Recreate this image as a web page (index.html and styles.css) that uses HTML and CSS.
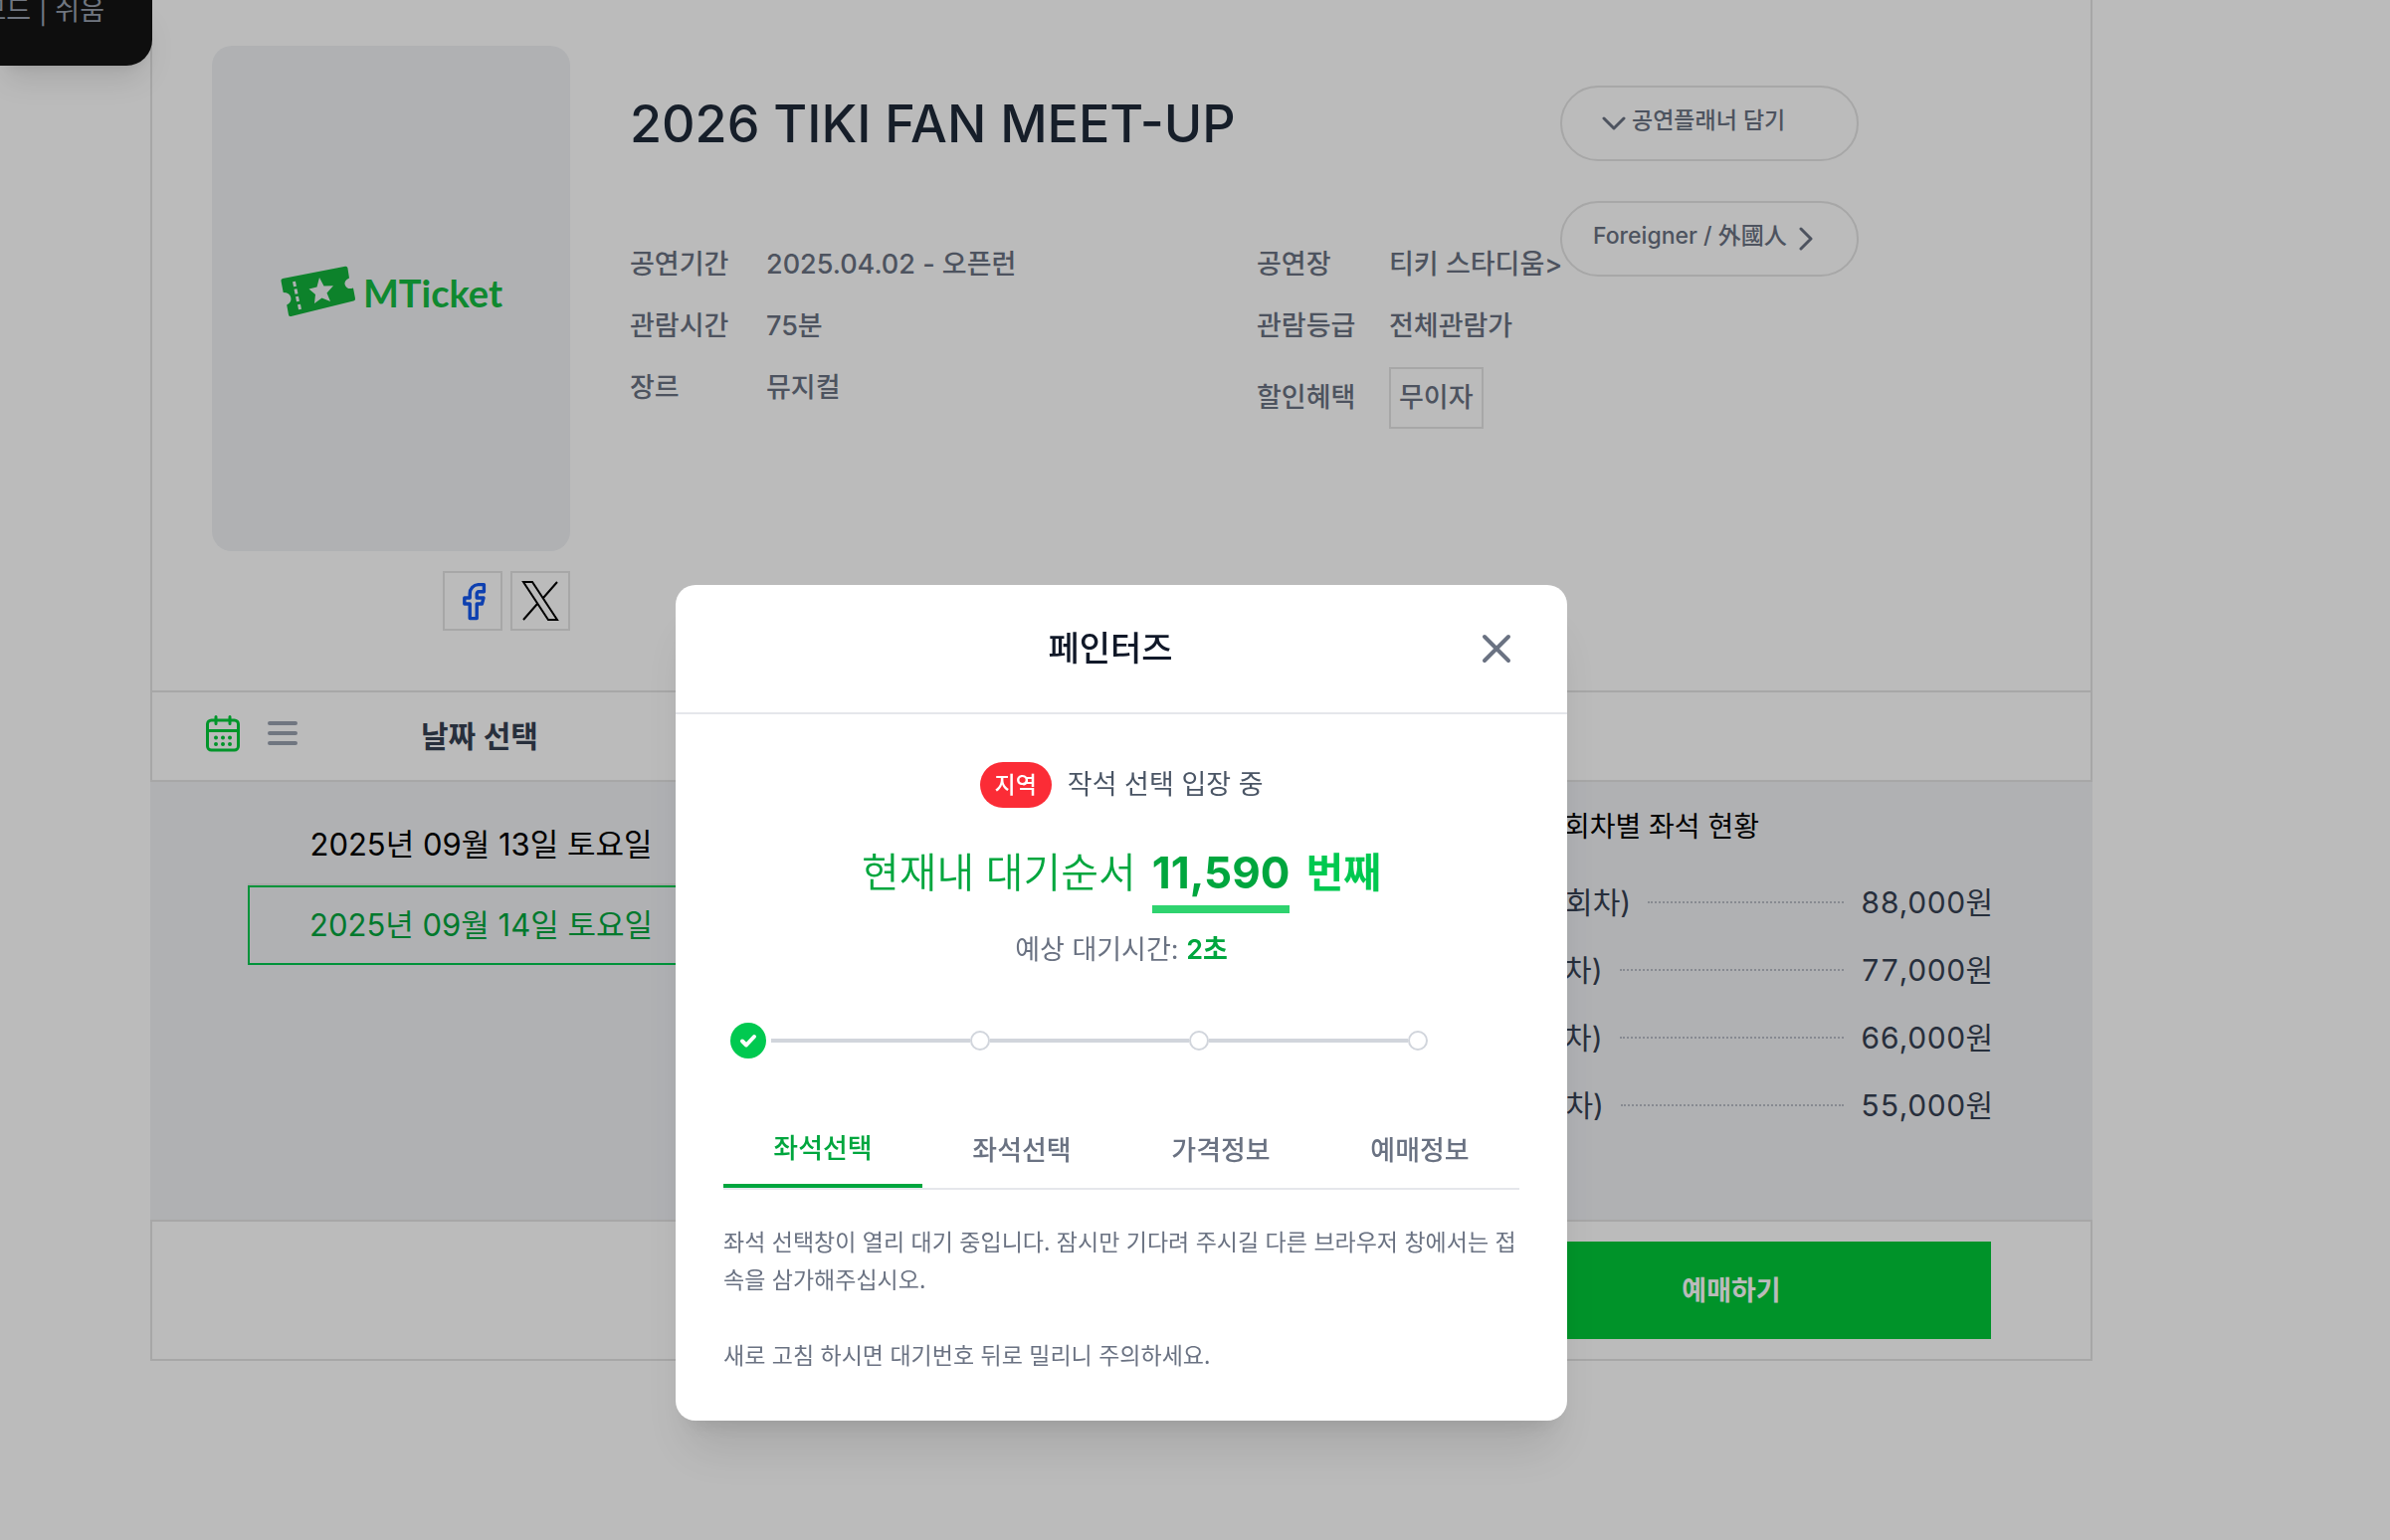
FILE: index.html
```
<!DOCTYPE html>
<html lang="ko">
<head>
<meta charset="utf-8">
<meta name="viewport" content="width=device-width, initial-scale=1">
<title>2026 TIKI FAN MEET-UP</title>
<link rel="stylesheet" href="styles.css">
</head>
<body>
<main class="panel">
  <section class="summary">
    <div class="poster-col">
      <div class="poster">
        <svg class="poster-mark" viewBox="0 0 78 54" aria-hidden="true">
          <path fill="#12b23b" d="M1.500 15.500 Q1 13.500 3 13 L66 0.700 Q68 0.300 68.400 2.300 L70 12.500 Q64 15 66 20 Q68 24.500 74 22.500 L76 33 Q76.300 35 74.300 35.500 L11.500 51 Q9.500 51.500 9 49.500 L7.200 39.500 Q12.500 37 11.300 32 Q10 27 3.700 27 Z"/>
          <path fill="#f0f2f5" d="M40 12 L44.500 20.500 L54 20.200 L47.500 27.500 L51 36 L42.500 32.500 L35 38 L36 29 L29.500 23.500 L37.500 21.500 Z"/>
          <path stroke="#f0f2f5" stroke-width="3" fill="none" d="M14.500 16 l1 5 M16 23.500 l1 5 M17.500 31 l1 5 M19.500 39 l1 5"/>
        </svg>
        <span class="poster-name">MTicket</span>
      </div>
      <div class="share">
        <a class="share-link" href="#facebook" aria-label="Facebook">
          <svg width="48" height="48" viewBox="0 0 24 24" fill="none" stroke="#1458f0" stroke-width="1.700" stroke-linecap="round" stroke-linejoin="round" aria-hidden="true"><path d="M7.900 10.500v3h2.700v7.300h3.500v-7.300h2.600l.8-3h-3.400V8.300a.9.900 0 0 1 .9-.9h2.700V3.800h-2.900a4.400 4.400 0 0 0-4.200 4.400v2.300z"/></svg>
        </a>
        <a class="share-link" href="#x" aria-label="X">
          <svg width="40" height="40" viewBox="0 0 40 40" fill="none" stroke="#000" stroke-width="2" aria-hidden="true"><path d="M3 1h9l25 38h-9zM37 1L23 17M17 23L3 39"/></svg>
        </a>
      </div>
    </div>
    <div class="details">
      <h1 class="title">2026 TIKI FAN MEET-UP</h1>
      <div class="facts">
        <dl class="fact-list fact-list-main">
          <dt>공연기간</dt><dd>2025.04.02 - 오픈런</dd>
          <dt>관람시간</dt><dd>75분</dd>
          <dt>장르</dt><dd>뮤지컬</dd>
        </dl>
        <dl class="fact-list fact-list-venue">
          <dt>공연장</dt><dd><a href="#venue">티키 스타디움&gt;</a></dd>
          <dt>관람등급</dt><dd>전체관람가</dd>
          <dt>할인혜택</dt><dd><span class="benefit">무이자</span></dd>
        </dl>
      </div>
    </div>
    <div class="actions">
      <button class="pill pill-planner" type="button">
        <svg width="24" height="24" viewBox="0 0 24 24" fill="none" stroke="currentColor" stroke-width="3" stroke-linecap="round" stroke-linejoin="round" aria-hidden="true"><path d="M2 7l10 10L22 7"/></svg>
        <span class="pill-label">공연플래너 담기</span>
      </button>
      <button class="pill pill-foreigner" type="button">
        <span class="pill-label">Foreigner / 外國人</span>
        <svg width="24" height="24" viewBox="0 0 24 24" fill="none" stroke="currentColor" stroke-width="3" stroke-linecap="round" stroke-linejoin="round" aria-hidden="true"><path d="M6 2l10 10L6 22"/></svg>
      </button>
    </div>
  </section>

  <section class="picker-bar">
    <button class="icon-button" type="button" aria-label="달력 보기">
      <svg width="48" height="48" viewBox="0 0 48 48" fill="none" stroke="#00cc3a" stroke-width="3" stroke-linecap="round" stroke-linejoin="round" aria-hidden="true">
        <rect x="8.500" y="11" width="31" height="30" rx="4"/><path d="M8.500 21.500h31M17 7.500v7M31 7.500v7"/>
        <path stroke-width="4" d="M17 28.500h0M24 28.500h0M31 28.500h0M17 35h0M24 35h0M31 35h0"/>
      </svg>
    </button>
    <button class="icon-button" type="button" aria-label="목록 보기">
      <svg width="48" height="48" viewBox="0 0 48 48" fill="none" stroke="#99a1af" stroke-width="4" stroke-linecap="round" aria-hidden="true"><path d="M11 14h26M11 24h26M11 34h26"/></svg>
    </button>
    <h2 class="picker-title">날짜 선택</h2>
  </section>

  <section class="schedule">
    <div class="dates">
      <button class="date" type="button">2025년 09월 13일 토요일</button>
      <button class="date date-selected" type="button">2025년 09월 14일 토요일</button>
    </div>
    <div class="seats">
      <h3 class="seats-title">회차별 좌석 현황</h3>
      <ul class="seat-list">
        <li><span>VIP석 (1회차)</span><i class="leader"></i><span class="price">88,000원</span></li>
        <li><span>R석 (1회차)</span><i class="leader"></i><span class="price">77,000원</span></li>
        <li><span>S석 (1회차)</span><i class="leader"></i><span class="price">66,000원</span></li>
        <li><span>A석 (1회차)</span><i class="leader"></i><span class="price">55,000원</span></li>
      </ul>
    </div>
  </section>

  <section class="booking">
    <button class="book" type="button">예매하기</button>
  </section>
</main>

<div class="mode-badge">모드 | 쉬움</div>

<div class="overlay">
  <div class="modal" role="dialog" aria-modal="true" aria-labelledby="modal-title">
    <header class="modal-head">
      <h2 class="modal-title" id="modal-title">페인터즈</h2>
      <button class="icon-button" type="button" aria-label="닫기">
        <svg width="48" height="48" viewBox="0 0 24 24" fill="none" stroke="#6a7282" stroke-width="2" stroke-linecap="round" aria-hidden="true"><path d="M6 6l12 12M18 6L6 18"/></svg>
      </button>
    </header>
    <div class="modal-body">
      <p class="status"><span class="tag">지역</span>작석 선택 입장 중</p>
      <p class="queue"><span>현재내 대기순서</span><strong class="queue-number">11,590</strong><strong class="queue-unit">번째</strong></p>
      <p class="wait">예상 대기시간: <strong>2초</strong></p>
      <div class="stepper" aria-hidden="true">
        <span class="step-done"><svg width="20" height="20" viewBox="0 0 20 20" fill="none" stroke="#fff" stroke-width="4" stroke-linecap="round" stroke-linejoin="round"><path d="M4 10.500l4 4L16 6"/></svg></span>
        <span class="step-line"></span><span class="step-dot"></span>
        <span class="step-line"></span><span class="step-dot"></span>
        <span class="step-line"></span><span class="step-dot"></span>
      </div>
      <div class="tabs" role="tablist">
        <button class="tab tab-active" type="button" role="tab" aria-selected="true">좌석선택</button>
        <button class="tab" type="button" role="tab" aria-selected="false">좌석선택</button>
        <button class="tab" type="button" role="tab" aria-selected="false">가격정보</button>
        <button class="tab" type="button" role="tab" aria-selected="false">예매정보</button>
      </div>
      <div class="notice">
        <p>좌석 선택창이 열리 대기 중입니다. 잠시만 기다려 주시길 다른 브라우저 창에서는 접속을 삼가해주십시오.</p>
        <p>새로 고침 하시면 대기번호 뒤로 밀리니 주의하세요.</p>
      </div>
    </div>
  </div>
</div>
</body>
</html>
```
FILE: styles.css
```
* { box-sizing: border-box; }

body {
  margin: 0;
  background: #fff;
  color: #000;
  font-family: Inter, "Noto Sans CJK KR", sans-serif;
  font-size: 27px;
  line-height: 42px;
}

h1, h2, h3, p, dl, dd, ul { margin: 0; padding: 0; }
ul { list-style: none; }
a { color: inherit; text-decoration: none; }
svg { display: block; flex: none; }

button {
  margin: 0;
  padding: 0;
  border: 0;
  background: none;
  color: inherit;
  font: inherit;
  cursor: pointer;
}

.panel { margin: 0 299px 0 151px; }

/* Event summary */
.summary {
  display: flex;
  align-items: flex-start;
  padding: 46px 233px 60px 60px;
  border: 2px solid #e4e4e4;
  border-top: 0;
  border-bottom: 0;
}
.poster-col { flex: none; width: 360px; margin-right: 60px; }
.poster {
  display: flex;
  align-items: center;
  justify-content: center;
  gap: 6px;
  height: 508px;
  padding-bottom: 12px;
  border-radius: 20px;
  background: #f0f2f5;
}
.poster-mark { width: 78px; height: 54px; }
.poster-name {
  color: #15bb42;
  font-family: Lato, sans-serif;
  font-size: 38px;
  font-weight: 700;
}
.share {
  display: flex;
  justify-content: flex-end;
  gap: 8px;
  margin-top: 20px;
}
.share-link {
  display: flex;
  align-items: center;
  justify-content: center;
  width: 60px;
  height: 60px;
  border: 2px solid #e4e4e4;
}

.details {
  flex: 1;
  min-width: 0;
  padding-top: 49px;
  color: #6a7282;
  font-weight: 500;
}
.title {
  color: #1e2939;
  font-size: 52px;
  font-weight: 500;
  line-height: 60px;
}
.facts { display: flex; margin-top: 90px; }
.fact-list { display: grid; row-gap: 20px; align-items: center; white-space: nowrap; }
.fact-list-main { flex: 1; grid-template-columns: 137px 1fr; align-content: start; }
.fact-list-venue { flex: none; width: 305px; grid-template-columns: 133px 1fr; }
.benefit {
  display: inline-block;
  padding: 8px;
  border: 2px solid #e4e4e4;
}

.actions {
  display: flex;
  flex-direction: column;
  gap: 40px;
  width: 300px;
  padding-top: 40px;
}
.pill {
  display: flex;
  align-items: center;
  height: 76px;
  border: 2px solid #e4e4e4;
  border-radius: 38px;
  color: #6a7282;
  font-size: 23px;
  font-weight: 500;
  white-space: nowrap;
}
.pill-label { padding-bottom: 6px; }
.pill-planner { gap: 6px; padding-left: 40px; }
.pill-foreigner { gap: 8px; padding-left: 31px; }

/* Date picker bar */
.picker-bar {
  display: flex;
  align-items: center;
  gap: 12px;
  height: 92px;
  padding-left: 47px;
  border: 2px solid #e4e4e4;
}
.picker-bar .icon-button { padding-bottom: 6px; }
.picker-title {
  margin-left: 103px;
  color: #364153;
  font-size: 30px;
  font-weight: 600;
}

/* Dates and seats */
.schedule {
  display: flex;
  justify-content: space-between;
  padding: 24px 100px 81px 98px;
  background: #f0f2f5;
}
.dates { width: 469px; }
.date {
  display: block;
  width: 100%;
  height: 80px;
  border-bottom: 2px solid #e4e4e4;
  font-size: 31px;
  white-space: nowrap;
}
.date-selected { border: 2px solid #00c950; color: #00a63e; }
.seats { width: 666px; }
.seats-title {
  margin-bottom: 21px;
  font-size: 28px;
  font-weight: 400;
  text-align: center;
}
.seat-list { padding-left: 129px; }
.seat-list li {
  display: flex;
  align-items: center;
  gap: 17px;
  height: 68px;
  color: #364153;
  font-size: 30px;
  white-space: nowrap;
}
.price { font-variant-numeric: tabular-nums; }
.leader { flex: 1; border-top: 2px dotted #b8bdc6; }

.booking {
  display: flex;
  justify-content: flex-end;
  padding: 20px 100px;
  border: 2px solid #e4e4e4;
}
.book {
  width: 522px;
  height: 98px;
  padding-top: 2px;
  background: #00c939;
  color: #fff;
  font-weight: 600;
}

/* Corner badge */
.mode-badge {
  position: absolute;
  top: 0;
  left: 0;
  display: flex;
  justify-content: flex-end;
  width: 153px;
  height: 66px;
  padding-right: 48px;
  border-radius: 0 0 26px 0;
  background: #141414;
  box-shadow: 0 20px 30px -6px rgba(0, 0, 0, .1), 0 8px 12px -8px rgba(0, 0, 0, .1);
  color: #99a1af;
  line-height: 22px;
  white-space: nowrap;
}

/* Queue dialog */
.overlay {
  position: fixed;
  inset: 0;
  display: flex;
  align-items: flex-start;
  justify-content: center;
  padding: 588px 148px 0 0;
  background: rgba(0, 0, 0, .267);
}
.modal {
  width: 896px;
  border-radius: 20px;
  background: #fff;
  box-shadow: 0 40px 50px -10px rgba(0, 0, 0, .1), 0 16px 20px -12px rgba(0, 0, 0, .1);
}
.modal-head {
  display: flex;
  align-items: center;
  height: 130px;
  padding: 0 47px 0 73px;
  border-bottom: 2px solid #e5e7eb;
}
.modal-title {
  flex: 1;
  color: #101828;
  font-size: 34px;
  font-weight: 500;
  text-align: center;
}
.modal-body { padding: 48px; }
.status {
  display: flex;
  align-items: center;
  justify-content: center;
  gap: 16px;
  color: #4a5565;
}
.tag {
  padding: 2px 15px;
  border-radius: 23px;
  background: #fb2c36;
  color: #fff;
  font-size: 23px;
  font-weight: 500;
}
.queue {
  display: flex;
  align-items: flex-start;
  justify-content: center;
  gap: 16px;
  margin-top: 32px;
  color: #00a63e;
  font-size: 41px;
  font-weight: 350;
  line-height: 66px;
}
.queue-number {
  border-bottom: 8px solid #2fd36f;
  font-size: 44px;
  font-weight: 700;
}
.queue-unit { color: #00c950; font-weight: 700; }
.wait { margin-top: 16px; color: #6a7282; text-align: center; }
.wait strong { color: #00a63e; font-weight: 600; }

.stepper {
  display: flex;
  align-items: center;
  margin: 52px 92px 0 7px;
}
.step-done {
  display: flex;
  align-items: center;
  justify-content: center;
  width: 36px;
  height: 36px;
  margin-right: 5px;
  border-radius: 50%;
  background: #00c950;
}
.step-line { flex: 1; height: 4px; background: #d1d5dc; }
.step-dot {
  width: 20px;
  height: 20px;
  border: 2px solid #d1d5dc;
  border-radius: 50%;
}

.tabs {
  display: flex;
  margin-top: 52px;
  border-bottom: 2px solid #e5e7eb;
}
.tab {
  flex: 1;
  height: 78px;
  padding-top: 3px;
  color: #6a7282;
  font-weight: 500;
}
.tab-active { border-bottom: 4px solid #00a63e; color: #00a63e; }

.notice {
  display: grid;
  gap: 38px;
  margin-top: 32px;
  color: #6a7282;
  font-family: "Noto Sans CJK KR", sans-serif;
  font-size: 23px;
  line-height: 38px;
}
```
